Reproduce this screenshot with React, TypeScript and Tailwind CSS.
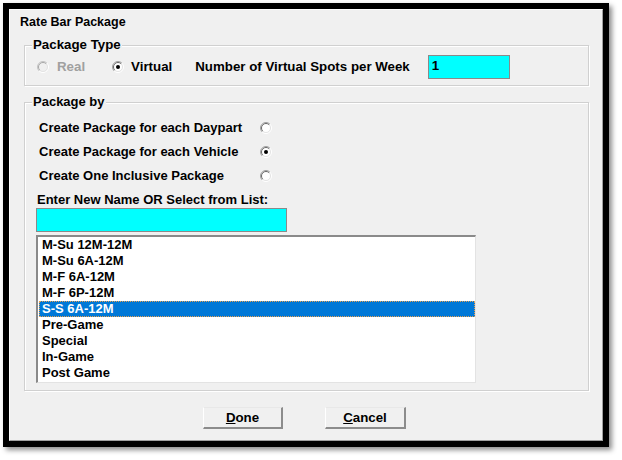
import React from 'react';

const LIST_ITEMS = [
  'M-Su 12M-12M',
  'M-Su 6A-12M',
  'M-F 6A-12M',
  'M-F 6P-12M',
  'S-S 6A-12M',
  'Pre-Game',
  'Special',
  'In-Game',
  'Post Game',
];

const PACKAGE_BY = [
  { label: 'Create Package for each Daypart', checked: false },
  { label: 'Create Package for each Vehicle', checked: true },
  { label: 'Create One Inclusive Package', checked: false },
];

function Radio({ checked = false, disabled = false }: { checked?: boolean; disabled?: boolean }) {
  return (
    <svg width="12" height="12" viewBox="0 0 12 12" className="shrink-0">
      <circle cx="6" cy="6" r="5" fill={disabled ? '#f0f0f0' : '#ffffff'} />
      <path d="M2.1 9.9 A5.5 5.5 0 0 1 9.9 2.1" fill="none" stroke={disabled ? '#c4c4c4' : '#a0a0a0'} strokeWidth="1" />
      <path d="M9.9 2.1 A5.5 5.5 0 0 1 2.1 9.9" fill="none" stroke="#ffffff" strokeWidth="1" />
      <path d="M2.8 9.2 A4.5 4.5 0 0 1 9.2 2.8" fill="none" stroke={disabled ? '#a8a8a8' : '#696969'} strokeWidth="1" />
      <path d="M9.2 2.8 A4.5 4.5 0 0 1 2.8 9.2" fill="none" stroke="#e3e3e3" strokeWidth="1" />
      {checked && <circle cx="6" cy="6" r="2" fill="#000000" />}
    </svg>
  );
}

function GroupBox({ title, className, children }: { title: string; className?: string; children: React.ReactNode }) {
  return (
    <div
      className={`relative ml-[14px] w-[565px] border border-[#d0d0d0] shadow-[1px_1px_0_#ffffff,inset_1px_1px_0_#ffffff] ${className ?? ''}`}
    >
      <span className="absolute left-[7px] -top-[9px] bg-[#f0f0f0] px-[1px] leading-[16px]">{title}</span>
      {children}
    </div>
  );
}

function Button({ label, className }: { label: string; className?: string }) {
  return (
    <button
      className={`h-[22px] border-t border-l border-t-[#e8e8e8] border-l-white border-r-2 border-b-2 border-r-[#8c8c8c] border-b-[#8c8c8c] bg-[#f0f0f0] leading-[16px] ${className ?? ''}`}
    >
      <span className="underline">{label[0]}</span>
      {label.slice(1)}
    </button>
  );
}

export default function App() {
  return (
    <div className="w-[622px] h-[460px] bg-white p-[3px]">
      <div className="w-[606px] h-[444px] border-[6px] border-black shadow-[3px_3px_5px_rgba(0,0,0,0.45)] font-['Liberation_Sans',Arial,sans-serif] font-bold text-[13.3px] text-black">
        <div className="h-full border-t border-l border-white border-r border-b border-r-[#a0a0a0] border-b-[#a0a0a0] bg-[#f0f0f0]">
          <div className="mt-[4px] pl-[10px] text-[12.5px] leading-[16px]">Rate Bar Package</div>

          <GroupBox title="Package Type" className="mt-[15px] h-[41px]">
            <div className="flex h-full items-center pl-[12px] pt-[2px]">
              <Radio disabled />
              <span className="ml-[8px] leading-[16px] text-[#a0a0a0]">Real</span>
              <span className="ml-[27px]">
                <Radio checked />
              </span>
              <span className="ml-[7px] leading-[16px]">Virtual</span>
              <span className="ml-[23px] leading-[16px]">Number of Virtual Spots per Week</span>
              <div className="ml-[18px] h-[24px] w-[82px] border border-[#8a8a8a] bg-[#00ffff] pl-[3px] pt-[2px] leading-[16px]">
                1
              </div>
            </div>
          </GroupBox>

          <GroupBox title="Package by" className="mt-[16px] h-[289px] text-[13px]">
            <div className="flex flex-col pt-[13px]">
              {PACKAGE_BY.map((row) => (
                <div key={row.label} className="flex h-[24px] items-center pl-[14px]">
                  <span className="w-[221px] leading-[16px]">{row.label}</span>
                  <Radio checked={row.checked} />
                </div>
              ))}
              <div className="mt-[4px] ml-[11px] pl-px leading-[16px]">Enter New Name OR Select from List:</div>
              <div className="ml-[11px] h-[24px] w-[251px] border border-[#8a8a8a] bg-[#00ffff]" />
              <div className="mt-[3px] ml-[11px] h-[148px] w-[440px] border-t-2 border-l-2 border-r border-b border-t-[#8a8a8a] border-l-[#8a8a8a] border-r-[#e3e3e3] border-b-[#e3e3e3] bg-white pl-px">
                {LIST_ITEMS.map((item, i) =>
                  i === 4 ? (
                    <div
                      key={item}
                      className="h-[16px] border border-dotted border-[#e8a050] bg-[#0078d7] pl-[2px] leading-[14px] text-white"
                    >
                      {item}
                    </div>
                  ) : (
                    <div key={item} className="h-[16px] pl-[3px] leading-[16px]">
                      {item}
                    </div>
                  )
                )}
              </div>
            </div>
          </GroupBox>

          <div className="mt-[16px] flex justify-center gap-[42px] pr-[3px]">
            <Button label="Done" className="w-[80px]" />
            <Button label="Cancel" className="w-[81px]" />
          </div>
        </div>
      </div>
    </div>
  );
}
